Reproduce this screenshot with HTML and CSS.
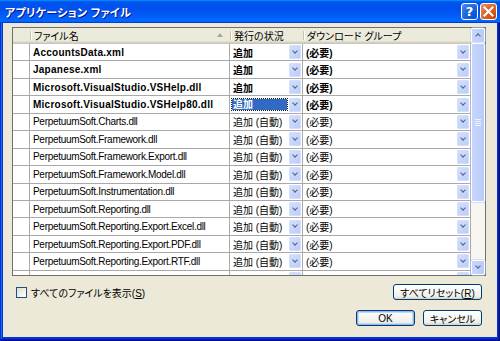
FILE: index.html
```html
<!DOCTYPE html>
<html lang="ja">
<head>
  <meta charset="UTF-8">
  <title>アプリケーション ファイル</title>
  <link rel="stylesheet" href="styles.css">
</head>
<body>
  <div class="window">
    <!-- Title bar -->
    <div class="titlebar">
      <span class="title">アプリケーション ファイル</span>
      <span class="tb-btn help">?</span>
      <span class="tb-btn close">
        <svg width="11" height="11" viewBox="0 0 11 11"><path d="M1.5 1.5 L9.5 9.5 M9.5 1.5 L1.5 9.5" stroke="#fff" stroke-width="2" stroke-linecap="square"/></svg>
      </span>
    </div>

    <div class="body">
      <!-- File grid -->
      <div class="grid">
        <div class="table">
          <div class="row">
            <div class="th"></div>
            <div class="th sorted"><span>ファイル名</span><span class="sort"></span></div>
            <div class="th">発行の状況</div>
            <div class="th">ダウンロード グループ</div>
          </div>

          <div class="row bold">
            <div class="td rh"></div>
            <div class="td">AccountsData.xml</div>
            <div class="td combo"><span class="val">追加</span><span class="drop"></span></div>
            <div class="td combo"><span class="val">(必要)</span><span class="drop"></span></div>
          </div>
          <div class="row bold">
            <div class="td rh"></div>
            <div class="td">Japanese.xml</div>
            <div class="td combo"><span class="val">追加</span><span class="drop"></span></div>
            <div class="td combo"><span class="val">(必要)</span><span class="drop"></span></div>
          </div>
          <div class="row bold">
            <div class="td rh"></div>
            <div class="td">Microsoft.VisualStudio.VSHelp.dll</div>
            <div class="td combo"><span class="val">追加</span><span class="drop"></span></div>
            <div class="td combo"><span class="val">(必要)</span><span class="drop"></span></div>
          </div>
          <div class="row bold">
            <div class="td rh"></div>
            <div class="td">Microsoft.VisualStudio.VSHelp80.dll</div>
            <div class="td combo"><span class="val sel">追加</span><span class="drop"></span></div>
            <div class="td combo"><span class="val">(必要)</span><span class="drop"></span></div>
          </div>
          <div class="row">
            <div class="td rh"></div>
            <div class="td">PerpetuumSoft.Charts.dll</div>
            <div class="td combo"><span class="val">追加 (自動)</span><span class="drop"></span></div>
            <div class="td combo"><span class="val">(必要)</span><span class="drop"></span></div>
          </div>
          <div class="row">
            <div class="td rh"></div>
            <div class="td">PerpetuumSoft.Framework.dll</div>
            <div class="td combo"><span class="val">追加 (自動)</span><span class="drop"></span></div>
            <div class="td combo"><span class="val">(必要)</span><span class="drop"></span></div>
          </div>
          <div class="row">
            <div class="td rh"></div>
            <div class="td">PerpetuumSoft.Framework.Export.dll</div>
            <div class="td combo"><span class="val">追加 (自動)</span><span class="drop"></span></div>
            <div class="td combo"><span class="val">(必要)</span><span class="drop"></span></div>
          </div>
          <div class="row">
            <div class="td rh"></div>
            <div class="td">PerpetuumSoft.Framework.Model.dll</div>
            <div class="td combo"><span class="val">追加 (自動)</span><span class="drop"></span></div>
            <div class="td combo"><span class="val">(必要)</span><span class="drop"></span></div>
          </div>
          <div class="row">
            <div class="td rh"></div>
            <div class="td">PerpetuumSoft.Instrumentation.dll</div>
            <div class="td combo"><span class="val">追加 (自動)</span><span class="drop"></span></div>
            <div class="td combo"><span class="val">(必要)</span><span class="drop"></span></div>
          </div>
          <div class="row">
            <div class="td rh"></div>
            <div class="td">PerpetuumSoft.Reporting.dll</div>
            <div class="td combo"><span class="val">追加 (自動)</span><span class="drop"></span></div>
            <div class="td combo"><span class="val">(必要)</span><span class="drop"></span></div>
          </div>
          <div class="row">
            <div class="td rh"></div>
            <div class="td">PerpetuumSoft.Reporting.Export.Excel.dll</div>
            <div class="td combo"><span class="val">追加 (自動)</span><span class="drop"></span></div>
            <div class="td combo"><span class="val">(必要)</span><span class="drop"></span></div>
          </div>
          <div class="row">
            <div class="td rh"></div>
            <div class="td">PerpetuumSoft.Reporting.Export.PDF.dll</div>
            <div class="td combo"><span class="val">追加 (自動)</span><span class="drop"></span></div>
            <div class="td combo"><span class="val">(必要)</span><span class="drop"></span></div>
          </div>
          <div class="row">
            <div class="td rh"></div>
            <div class="td">PerpetuumSoft.Reporting.Export.RTF.dll</div>
            <div class="td combo"><span class="val">追加 (自動)</span><span class="drop"></span></div>
            <div class="td combo"><span class="val">(必要)</span><span class="drop"></span></div>
          </div>
          <!-- partly visible row at the bottom -->
          <div class="row">
            <div class="td rh"></div>
            <div class="td"></div>
            <div class="td combo"><span class="val"></span><span class="drop"></span></div>
            <div class="td combo"><span class="val"></span><span class="drop"></span></div>
          </div>
        </div>

        <!-- Vertical scrollbar -->
        <div class="scrollbar">
          <div class="sb-btn up"></div>
          <div class="sb-thumb"><span class="grip"></span></div>
          <div class="sb-track"></div>
          <div class="sb-btn down"></div>
        </div>
      </div>

      <div class="options">
        <label class="check"><span class="box"></span><span>すべてのファイルを表示(<u>S</u>)</span></label>
        <button class="btn reset">すべてリセット(<u>R</u>)</button>
      </div>

      <div class="actions">
        <button class="btn default">OK</button>
        <button class="btn">キャンセル</button>
      </div>
    </div>
  </div>
</body>
</html>
```

FILE: styles.css
```css
body {
  margin: 0;
  font-family: "Liberation Sans", "Noto Sans CJK JP", sans-serif;
  font-size: 10px;
  font-feature-settings: "palt";
  color: #000;
}

.window {
  width: 500px;
  height: 341px;
  display: flex;
  flex-direction: column;
  background: #0831d9;
  box-shadow: inset -1px -1px #00138c, inset 1px 1px #0831d9,
    inset -2px -2px #001ea0, inset 2px 2px #166aee;
}

/* Title bar */
.titlebar {
  height: 23px;
  display: flex;
  align-items: center;
  padding: 0 3px 0 5px;
  background: linear-gradient(180deg, #0997ff, #0053ee 8%, #0050ee 40%, #06f 88%, #06f 93%, #005bff 95%, #003dd7 96%, #003dd7);
  color: #fff;
}

.title {
  flex: 1;
  font-size: 11px;
  font-weight: bold;
  text-shadow: 1px 1px #0f1089;
  letter-spacing: 0.3px;
}

.tb-btn {
  width: 17px;
  height: 17px;
  box-sizing: border-box;
  margin-left: 2px;
  border: 1px solid #fff;
  border-radius: 3px;
  display: flex;
  align-items: center;
  justify-content: center;
}

.help {
  background: radial-gradient(circle at 90% 90%, #0054e9 0%, #2263d5 55%, #4480f0 85%, #689cf8 100%);
  font-family: "DejaVu Sans", sans-serif;
  font-weight: bold;
  font-size: 13px;
  line-height: 1;
}

.close {
  background: radial-gradient(circle at 90% 90%, #cc4600 0%, #dc6527 55%, #e68a5f 90%, #f3a584 100%);
}

/* Dialog body */
.body {
  flex: 1;
  margin: 0 3px 4px;
  padding: 4px 0 0 9px;
  background: #ece9d8;
  display: flex;
  flex-direction: column;
}

.grid {
  width: 474px;
  height: 249px;
  box-sizing: border-box;
  display: flex;
  border: 1px solid #6f6f6f;
  background: #fff;
}

.table {
  flex: 1;
  display: grid;
  grid-template-columns: 17px 200px 73px 168px;
  grid-template-rows: 16px;
  grid-auto-rows: 17.44px;
  align-content: start;
  overflow: hidden;
}

.row {
  display: contents;
}

.th {
  position: relative;
  display: flex;
  align-items: center;
  padding: 0 0 2px 4px;
  background: #ebeadb;
  box-shadow: inset 0 -1px #cbc7b8, inset 0 -2px #d6d2c2, inset 0 -3px #e2decd;
  white-space: nowrap;
}

.th + .th::before {
  content: "";
  position: absolute;
  left: 0;
  top: 3px;
  bottom: 4px;
  width: 1px;
  background: #c7c5b2;
  box-shadow: 1px 0 #fff;
}

.th.sorted {
  justify-content: space-between;
  padding-right: 7px;
}

.sort {
  width: 0;
  height: 0;
  border-left: 3.5px solid transparent;
  border-right: 3.5px solid transparent;
  border-bottom: 4px solid #aca899;
}

.td {
  box-sizing: border-box;
  display: flex;
  align-items: center;
  padding-left: 3px;
  border-right: 1px solid #a9a8ab;
  border-bottom: 1px solid #a9a8ab;
  white-space: nowrap;
  overflow: hidden;
  letter-spacing: -0.3px;
}

.bold .td {
  font-weight: bold;
  letter-spacing: 0.25px;
}

.combo {
  justify-content: space-between;
  padding: 0 1px 0 2px;
  letter-spacing: 0;
}

.bold .combo {
  letter-spacing: 0;
}

.val {
  padding-left: 1px;
}

.val.sel {
  width: 54px;
  height: 11px;
  line-height: 11px;
  background: #316ac5;
  color: #fff;
  outline: 1px dotted #1a1a1a;
}

.drop {
  position: relative;
  flex: none;
  width: 12px;
  height: 14px;
  box-sizing: border-box;
  border: 1px solid #d2defc;
  border-radius: 1px;
  background: linear-gradient(135deg, #d3dffd, #bccdf8);
}

.drop::after {
  content: "";
  position: absolute;
  left: 3px;
  top: 2.5px;
  width: 3px;
  height: 3px;
  border-right: 1.5px solid #4d6185;
  border-bottom: 1.5px solid #4d6185;
  transform: rotate(45deg);
}

/* Scrollbar */
.scrollbar {
  width: 14px;
  display: flex;
  flex-direction: column;
  background: #f6f5f0;
}

.sb-btn,
.sb-thumb {
  position: relative;
  box-sizing: border-box;
  border: 1px solid #fff;
  border-radius: 2px;
  background: linear-gradient(90deg, #c8d6fc, #b9cbf7);
  box-shadow: 0 0 0 0.5px #b0c3ef;
}

.sb-btn {
  height: 15px;
}

.sb-btn::after {
  content: "";
  position: absolute;
  left: 3.5px;
  width: 3px;
  height: 3px;
  border-right: 1.5px solid #4d6185;
  border-bottom: 1.5px solid #4d6185;
}

.sb-btn.up::after {
  top: 5px;
  transform: rotate(-135deg);
}

.sb-btn.down::after {
  top: 3px;
  transform: rotate(45deg);
}

.sb-thumb {
  height: 159px;
  display: flex;
  align-items: center;
  justify-content: center;
}

.grip {
  width: 6px;
  height: 7px;
  background: repeating-linear-gradient(180deg, #eef3fe 0, #eef3fe 1px, transparent 1px, transparent 2px);
}

.sb-track {
  flex: 1;
}

/* Bottom controls */
.options {
  display: flex;
  justify-content: space-between;
  align-items: center;
  margin: 8px 15px 0 4px;
}

.check {
  display: flex;
  align-items: center;
  gap: 4px;
}

.box {
  width: 11px;
  height: 11px;
  box-sizing: border-box;
  border: 1px solid #1c5180;
  background: linear-gradient(135deg, #dcdcd7, #fff);
}

u {
  text-decoration-thickness: 1px;
  text-underline-offset: 1px;
}

.actions {
  display: flex;
  justify-content: flex-end;
  gap: 8px;
  margin: 10px 15px 0 0;
}

.btn {
  height: 16px;
  width: 59px;
  padding: 0;
  border: 1px solid #003c74;
  border-radius: 3px;
  background: linear-gradient(180deg, #fff, #f0f0ea 80%, #d6d0c5);
  font: inherit;
  color: #000;
}

.btn.reset {
  width: 89px;
}

.btn.default {
  box-shadow: inset 0 0 0 1px #98b8ea, inset 0 0 0 2px #c6d9f6;
}
```
